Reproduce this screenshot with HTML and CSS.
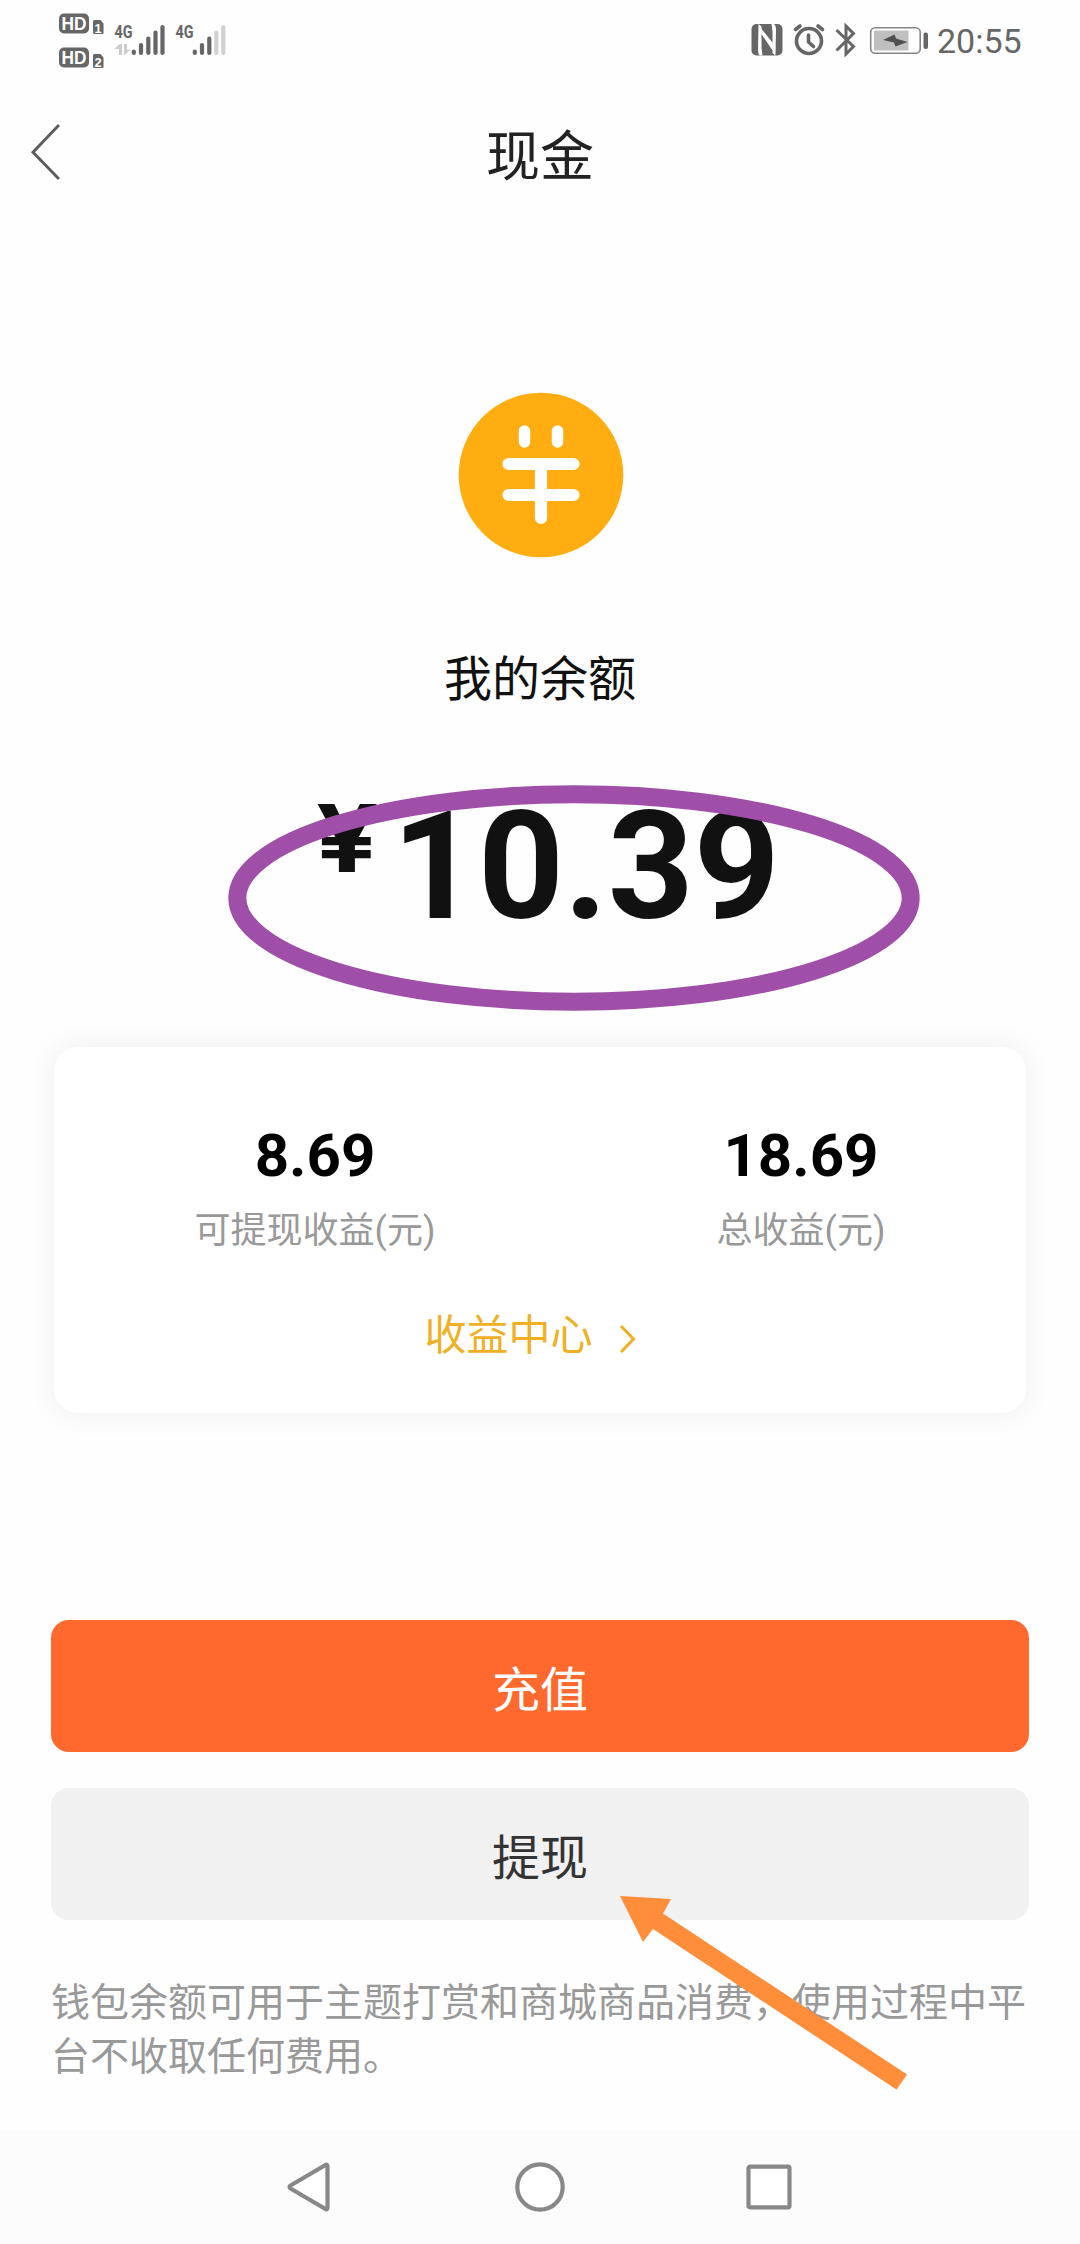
FILE: index.html
```html
<!DOCTYPE html>
<html lang="zh-CN">
<head>
<meta charset="utf-8">
<title>现金</title>
<link rel="stylesheet" href="styles.css">
</head>
<body>
<div class="screen">
  <header class="status">
    <svg class="status-left" width="180" height="80" viewBox="50 0 180 80">
      <g fill="#666">
        <rect x="59" y="13.500" width="30" height="20" rx="5"/>
        <rect x="59" y="47.500" width="30" height="20" rx="5"/>
        <path d="M94.500 20h6l3 3.500v9.500q0 1-1 1h-8q-1.500 0-1.500-1.500v-11q0-1.500 1.500-1.500zM94.500 54h6l3 3.500v9.500q0 1-1 1h-8q-1.500 0-1.500-1.500v-11q0-1.500 1.500-1.500z"/>
      </g>
      <g class="hd">
        <text x="61.500" y="30" textLength="25" lengthAdjust="spacingAndGlyphs">HD</text>
        <text x="61.500" y="64" textLength="25" lengthAdjust="spacingAndGlyphs">HD</text>
        <text class="sim" x="94.500" y="32.500">1</text>
        <text class="sim" x="94.500" y="66.500">2</text>
      </g>
      <g class="net">
        <text x="114.500" y="38" textLength="18" lengthAdjust="spacingAndGlyphs">4G</text>
        <text x="175.500" y="38" textLength="18" lengthAdjust="spacingAndGlyphs">4G</text>
      </g>
      <g fill="none" stroke="#666" stroke-width="4.200" stroke-linecap="round">
        <path d="M133.800 51.500v1.500M141 45v8M148.300 38.500v14.500M155.500 32.500v20.500M162.500 27v26M194.800 51.500v1.500M202 45v8M209.300 38.500v14.500"/>
        <path stroke="#d0d0d0" d="M216.300 32.500v20.500M223.300 27v26"/>
      </g>
      <path fill="#ccc" d="M119.500 44h2.500v11h-3v-6h-4.500zM124 44h3v5.500h3l-5 5.500h-1z"/>
    </svg>
    <div class="status-right">
      <svg width="180" height="80" viewBox="748 0 180 80">
        <rect x="751.500" y="24" width="31" height="31.500" rx="5" fill="#666"/>
        <path d="M758.500 24l3 2.500v21.500l1 7.500-2.500 0q-2-1.500-2-5zM775.500 55.500l-3-2.500V31.500l-1-7.500 2.500 0q2 1.500 2 5zM760 27l14 17.500v8L760 32z" fill="#fff"/>
        <g fill="none" stroke="#666" stroke-width="3.600" stroke-linecap="round" stroke-linejoin="round">
          <circle cx="809" cy="41" r="12.500"/>
          <path d="M808.500 35v7l5 4.500"/>
          <path d="M795.500 29.500l4.500-3.500M822.500 29.500l-4.500-3.500"/>
        </g>
        <path d="M836.500 30l17 16.500-7.500 7.500V26l7.500 7.500-17 17" fill="none" stroke="#666" stroke-width="3"/>
        <rect x="870.700" y="27.700" width="49.500" height="25.500" rx="4.500" fill="#fff" stroke="#858585" stroke-width="1.600"/>
        <rect x="874" y="30.500" width="34.500" height="20" rx="1" fill="#bfbfbf"/>
        <path d="M883 40l11.500-5.500 1.500 4L907.500 42l-12 4.500-1.500-4z" fill="#505050"/>
        <rect x="923.500" y="32.500" width="4.500" height="16.500" rx="2" fill="#666"/>
      </svg>
      <span class="clock">20:55</span>
    </div>
  </header>

  <div class="titlebar">
    <svg class="back" width="34" height="60" viewBox="0 0 34 60"><path d="M33 3L7 30.200 33 57" fill="none" stroke="#5c5c5c" stroke-width="3"/></svg>
    <h1>现金</h1>
  </div>

  <main>
    <svg class="coin" width="166" height="166" viewBox="0 0 166 166">
      <circle cx="83" cy="83" r="82.300" fill="#ffad10"/>
      <path d="M66.500 39v11M99.500 39v11" stroke="#fff" stroke-width="11.500" stroke-linecap="round"/>
      <path d="M50.500 72h65M50.500 103h65M83 72v54" stroke="#fff" stroke-width="12.200" stroke-linecap="round" fill="none"/>
    </svg>
    <h2>我的余额</h2>
    <div class="amount">
      <span class="yen">¥</span><span class="number">10.39</span>
      <svg class="ring" width="694" height="228" viewBox="0 0 694 228"><ellipse cx="347" cy="114" rx="336.700" ry="103.700" fill="none" stroke="#a04fa9" stroke-width="18"/></svg>
    </div>

    <section class="card">
      <div class="stats">
        <div class="stat"><strong>8.69</strong><span>可提现收益(元)</span></div>
        <div class="stat"><strong>18.69</strong><span>总收益(元)</span></div>
      </div>
      <a class="center-link">收益中心<svg width="20" height="30" viewBox="0 0 20 30"><path d="M3 2l12.500 13L3 28" fill="none" stroke="#f0b024" stroke-width="3"/></svg></a>
    </section>

    <div class="actions">
      <button class="btn primary">充值</button>
      <button class="btn">提现
        <svg class="pointer" width="290" height="200" viewBox="0 0 290 200"><path d="M0 0L51 3 43 17.500 287 178.500 276.500 193.500 33 33 23 46z" fill="#ff8d3a"/></svg>
      </button>
    </div>
    <p class="note">钱包余额可用于主题打赏和商城商品消费，使用过程中平台不收取任何费用。</p>
  </main>

  <nav class="navbar">
    <svg width="50" height="54" viewBox="0 0 50 54"><path d="M40.500 5Q42.500 4 42.500 6.500V47.500Q42.500 50 40.500 49L5.500 28.500Q3.500 27 5.500 25.500z" fill="#fff" stroke="#888" stroke-width="4.200" stroke-linejoin="round"/></svg>
    <svg width="54" height="54" viewBox="0 0 54 54"><circle cx="27" cy="27" r="22.700" fill="#fff" stroke="#888" stroke-width="4.200"/></svg>
    <svg width="50" height="54" viewBox="0 0 50 54"><rect x="4.500" y="6.700" width="41" height="40.600" rx="1.500" fill="#fff" stroke="#888" stroke-width="4.200"/></svg>
  </nav>
</div>
</body>
</html>
```
FILE: styles.css
```css
* { box-sizing: border-box; }
body {
  margin: 0;
  background: #fefefe;
  font-family: Roboto, "Noto Sans CJK SC", sans-serif;
}
h1, h2, p { margin: 0; font-weight: 400; }
svg { display: block; flex: none; }
.screen {
  width: 1080px;
  height: 2244px;
  display: flex;
  flex-direction: column;
  overflow: hidden;
}
.status {
  height: 80px;
  padding: 0 59px 0 50px;
  display: flex;
  justify-content: space-between;
}
.status-right { display: flex; gap: 9px; }
.clock {
  height: 80px;
  line-height: 82px;
  font-size: 34px;
  color: #666;
  width: 84px;
  white-space: nowrap;
}
.hd { font: 700 19px "Liberation Sans", sans-serif; fill: #fff; }
.hd .sim { font-size: 13px; }
.net { font: 700 18px Roboto, sans-serif; fill: #666; }
.titlebar {
  height: 146px;
  padding: 0 27px;
  display: grid;
  grid-template-columns: 60px 1fr 60px;
  align-items: start;
}
.back { margin-top: 42px; margin-left: -1px; }
h1 {
  padding-top: 40px;
  line-height: 76px;
  font-size: 54px;
  text-align: center;
  color: #222;
}
main {
  flex: 1;
  display: flex;
  flex-direction: column;
  align-items: center;
  padding: 166px 51px 0;
}
.coin { margin-left: 2px; }
h2 {
  margin-top: 87px;
  height: 69px;
  line-height: 70px;
  font-size: 48px;
  color: #111;
}
.amount {
  position: relative;
  align-self: stretch;
  height: 333px;
  display: flex;
  align-items: flex-start;
  padding: 56px 0 0 265px;
  color: #111;
  font-weight: 700;
}
.yen {
  width: 76px;
  padding-top: 12px;
  font-family: Inter, Roboto, sans-serif;
  font-size: 94px;
  line-height: 112px;
  transform: scaleX(1.16);
  transform-origin: left;
}
.number { padding-top: 7px; font-size: 150px; line-height: 180px; }
.ring { position: absolute; left: 176px; top: 70px; }
.card {
  width: 972px;
  height: 366px;
  flex: none;
  border-radius: 24px;
  background: #fff;
  box-shadow: 0 0 30px rgba(0, 0, 0, .07);
  display: flex;
  flex-direction: column;
  align-items: center;
}
.stats { display: flex; width: 100%; padding-top: 71px; }
.stat {
  width: 50%;
  padding-left: 36px;
  display: flex;
  flex-direction: column;
  align-items: center;
}
.stat strong { font-size: 60px; line-height: 76px; color: #000; }
.stat span { font-size: 36px; line-height: 54px; margin-top: 10px; color: #999; }
.center-link {
  margin-top: 47px;
  margin-left: -18px;
  display: flex;
  align-items: center;
  gap: 25px;
  font-size: 42px;
  line-height: 62px;
  color: #f0b024;
}
.center-link svg { margin-top: 5px; }
.actions {
  align-self: stretch;
  margin-top: 207px;
  display: flex;
  flex-direction: column;
  gap: 36px;
}
.btn {
  position: relative;
  height: 132px;
  border: 0;
  border-radius: 18px;
  background: #f1f1f1;
  color: #333;
  font: 48px Roboto, "Noto Sans CJK SC", sans-serif;
  padding: 0 0 1px;
}
.primary { background: #ff692e; color: #fff; }
.pointer { position: absolute; left: 569px; top: 108px; z-index: 1; }
.note {
  width: 978px;
  margin-top: 56px;
  font-size: 39px;
  line-height: 54px;
  color: #999;
}
.navbar {
  height: 114px;
  flex: none;
  background: #fcfcfc;
  display: flex;
  justify-content: space-between;
  align-items: center;
  padding: 0 286px 0 285px;
}
```
